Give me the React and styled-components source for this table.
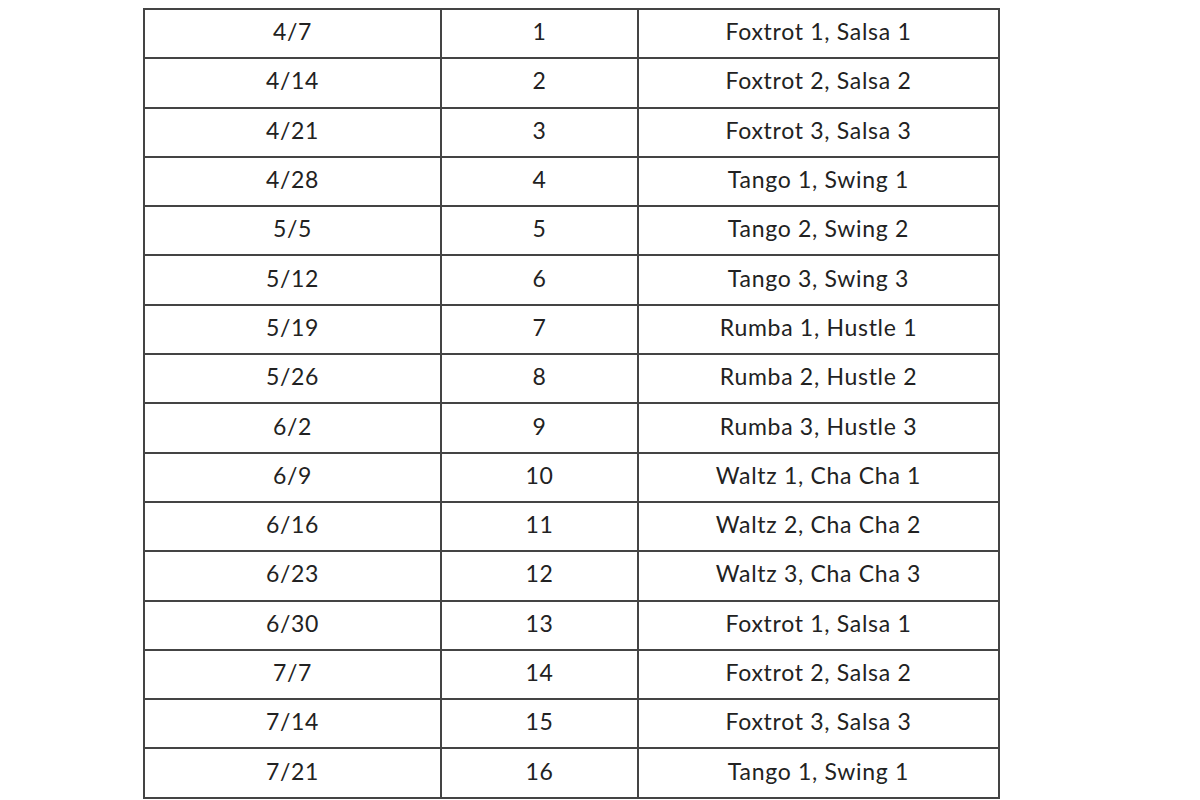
import React from 'react';
import styled, { createGlobalStyle } from 'styled-components';

const rows = [
  ['4/7', '1', 'Foxtrot 1, Salsa 1'],
  ['4/14', '2', 'Foxtrot 2, Salsa 2'],
  ['4/21', '3', 'Foxtrot 3, Salsa 3'],
  ['4/28', '4', 'Tango 1, Swing 1'],
  ['5/5', '5', 'Tango 2, Swing 2'],
  ['5/12', '6', 'Tango 3, Swing 3'],
  ['5/19', '7', 'Rumba 1, Hustle 1'],
  ['5/26', '8', 'Rumba 2, Hustle 2'],
  ['6/2', '9', 'Rumba 3, Hustle 3'],
  ['6/9', '10', 'Waltz 1, Cha Cha 1'],
  ['6/16', '11', 'Waltz 2, Cha Cha 2'],
  ['6/23', '12', 'Waltz 3, Cha Cha 3'],
  ['6/30', '13', 'Foxtrot 1, Salsa 1'],
  ['7/7', '14', 'Foxtrot 2, Salsa 2'],
  ['7/14', '15', 'Foxtrot 3, Salsa 3'],
  ['7/21', '16', 'Tango 1, Swing 1'],
];

const GlobalStyle = createGlobalStyle`
  html, body {
    margin: 0;
    background: #fff;
  }
`;

const Page = styled.div`
  width: 1200px;
  height: 800px;
  overflow: hidden;
  padding: 8px 0 0 143px;
  box-sizing: border-box;
  font-family: Lato, 'Open Sans', sans-serif;
`;

const Grid = styled.div`
  display: grid;
  grid-template-columns: 297px 197px 361px;
  grid-auto-rows: 49.3px;
  width: max-content;
  border-top: 2px solid #444;
  border-left: 2px solid #444;
`;

const Cell = styled.div`
  display: flex;
  align-items: center;
  justify-content: center;
  border-right: 2px solid #444;
  border-bottom: 2px solid #444;
  font-size: 23px;
  letter-spacing: 0.7px;
  color: #222;
  padding-bottom: 5px;
`;

const App = () => {
  return (
    <>
      <GlobalStyle />
      <Page>
        <Grid>
          {rows.map((r, i) =>
            r.map((c, j) => <Cell key={i + '-' + j}>{c}</Cell>)
          )}
        </Grid>
      </Page>
    </>
  );
};

export default App;
